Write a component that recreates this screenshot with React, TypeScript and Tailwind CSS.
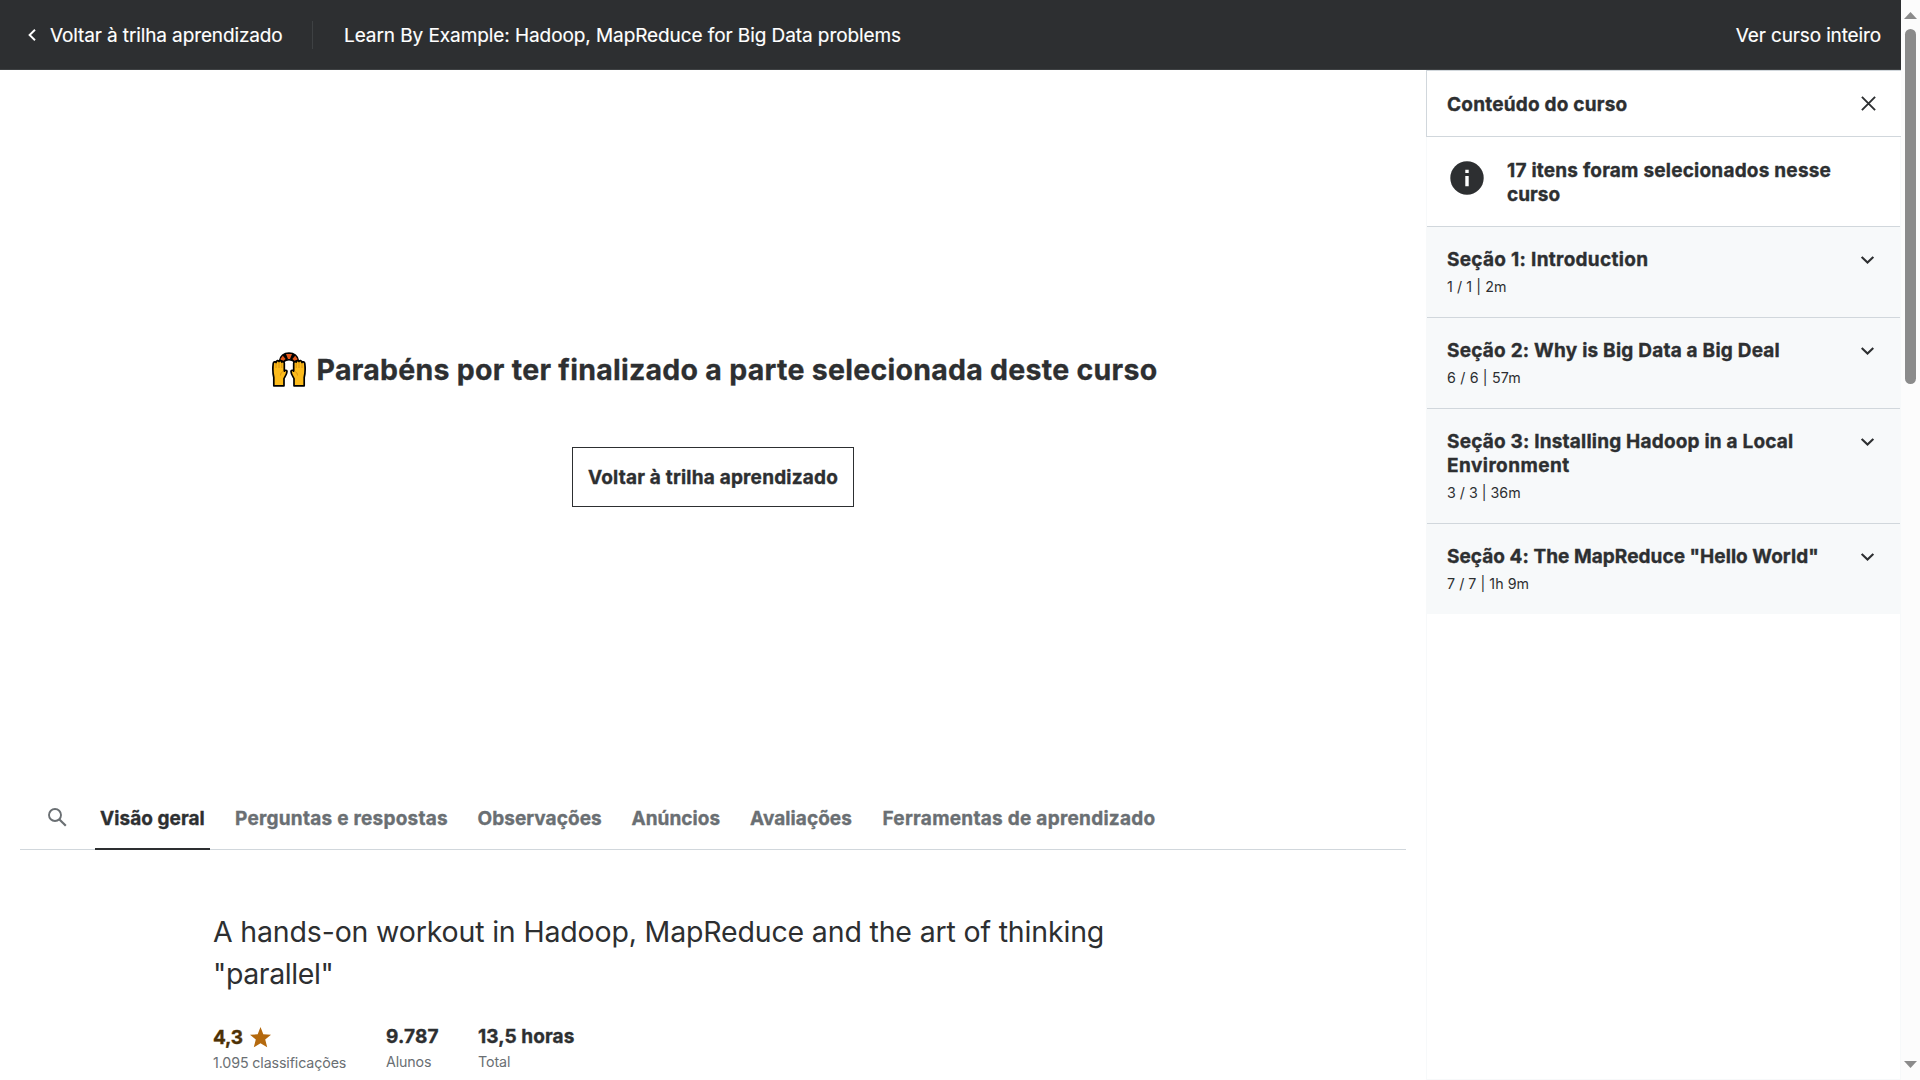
import React from 'react';

type Section = { title: string[]; meta: string; tracking: string; metaTracking: string };

const sections: Section[] = [
  { title: ['Seção 1: Introduction'], meta: '1 / 1 | 2m', tracking: 'tracking-[0.3px]', metaTracking: 'tracking-[0.08px]' },
  { title: ['Seção 2: Why is Big Data a Big Deal'], meta: '6 / 6 | 57m', tracking: 'tracking-[0.22px]', metaTracking: 'tracking-[0.17px]' },
  { title: ['Seção 3: Installing Hadoop in a Local', 'Environment'], meta: '3 / 3 | 36m', tracking: 'tracking-[0.2px]', metaTracking: 'tracking-[0px]' },
  { title: ['Seção 4: The MapReduce "Hello World"'], meta: '7 / 7 | 1h 9m', tracking: 'tracking-[0.05px]', metaTracking: 'tracking-[0.04px]' },
];

const tabs = [
  { label: 'Perguntas e respostas', width: 'w-[242.5px]', tracking: 'tracking-[0.25px]' },
  { label: 'Observações', width: 'w-[154px]', tracking: 'tracking-[0.05px]' },
  { label: 'Anúncios', width: 'w-[118.5px]', tracking: 'tracking-[0.05px]' },
  { label: 'Avaliações', width: 'w-[132.5px]', tracking: 'tracking-[0.07px]' },
  { label: 'Ferramentas de aprendizado', width: 'w-[290px]', tracking: 'tracking-[0.27px]' },
];

function Hand() {
  return (
    <path
      d="M1.800 33.800V25.500C.9 22 .8 15 1.200 11.500 1.400 9.600 3.600 9.400 4 10.600 4.200 8.200 6.600 8 7 9.600 7.400 8 9.700 8.200 9.800 10.200 10.300 9 12.300 9.400 12.300 11.200V19.200C13.200 17.800 15 18 15 19.400 15 22 12.700 25 12 26.500V33.800Z"
      fill="#fcbb1c"
      stroke="#000"
      strokeWidth="1.700"
      strokeLinejoin="round"
    />
  );
}

function RaisedHands() {
  return (
    <svg className="h-[35px] w-[34px] shrink-0" viewBox="0 0 34 35">
      <path d="M7.500 9C8 4 12 1 17 1s9 3 9.500 8L22 9.500c-2.500-2.500-7.500-2.500-10 0z" fill="#000" stroke="#000" strokeWidth="1.500" strokeLinejoin="round" />
      <path d="M8.200 7.200 10.800 3.800 13.600 7 11.200 9zM14 2h6L18 7h-2zM25.800 7.200 23.200 3.800 20.400 7l2.400 2z" fill="#e2581c" />
      <Hand />
      <g transform="translate(34 0) scale(-1 1)">
        <Hand />
      </g>
      <path d="M4 11v5M7 10.500v5.500M9.800 11v5M30 11v5M27 10.500v5.500M24.200 11v5M12 19.500c-2.500 0-3.500 2-3.500 4M22 19.500c2.500 0 3.500 2 3.500 4" stroke="#d08a10" strokeWidth=".8" fill="none" />
    </svg>
  );
}

function TopBar() {
  return (
    <header className="flex h-[70px] items-center border-b border-[#3e4143] bg-[#2d2f31] pl-[27px] pr-5 text-[19px] leading-7 text-white [-webkit-text-stroke:0.15px]">
      <svg className="mr-[13px] h-3 w-[10px]" viewBox="0 0 10 12" fill="none">
        <path d="M8 .8 2.600 6 8 11.200" stroke="#fff" strokeWidth="1.900" />
      </svg>
      <span className="w-[262px] whitespace-nowrap pt-0.5 tracking-[-0.12px]">Voltar à trilha aprendizado</span>
      <span className="h-7 w-px bg-[#3e4143]" />
      <span className="ml-[31px] whitespace-nowrap pt-0.5 tracking-[-0.08px]">Learn By Example: Hadoop, MapReduce for Big Data problems</span>
      <span className="ml-auto whitespace-nowrap pt-0.5 tracking-[-0.13px]">Ver curso inteiro</span>
    </header>
  );
}

function CourseContent() {
  return (
    <aside className="flex w-[475px] shrink-0 flex-col">
      <div className="flex h-[67px] items-center border-y border-l border-[#d1d7dc] pl-[20px] pr-[25px]">
        <h2 className="pt-0.5 text-[19px] font-bold leading-6 tracking-[0.22px] [-webkit-text-stroke:0.35px]">Conteúdo do curso</h2>
        <svg className="ml-auto h-[15px] w-[15px]" viewBox="0 0 15 15" fill="none">
          <path d="M.9.9l13.200 13.200M14.100.9.9 14.100" stroke="#2d2f31" strokeWidth="1.900" />
        </svg>
      </div>
      <div className="flex flex-1 flex-col border-x border-b border-[#f7f9fa]">
        <div className="flex h-[90px] border-b border-[#d1d7dc] pl-[23px] pt-[22px]">
          <svg className="mt-[2px] h-[34px] w-[34px]" viewBox="0 0 34 34">
            <circle cx="17" cy="17" r="16.700" fill="#2d2f31" />
            <path d="M15.300 8.700h3.400v3.300h-3.400zM15.300 15h3.400v10.300h-3.400z" fill="#fff" />
          </svg>
          <p className="ml-[23px] whitespace-nowrap text-[19px] font-bold leading-6 tracking-[0.22px] [-webkit-text-stroke:0.35px]">
            17 itens foram selecionados nesse
            <br />
            <span className="tracking-[0px]">curso</span>
          </p>
        </div>
        {sections.map((s, i) => (
          <div key={s.meta} className={`flex justify-between bg-[#f7f9fa] pb-5 pl-5 pr-[26px] pt-[21px] ${i < 3 ? 'border-b border-[#d1d7dc]' : ''}`}>
            <div className="whitespace-nowrap">
              {s.title.map((line) => (
                <h3
                  key={line}
                  className={`text-[19px] font-bold leading-6 [-webkit-text-stroke:0.35px] ${line === 'Environment' ? 'tracking-[0.45px]' : s.tracking}`}
                >
                  {line}
                </h3>
              ))}
              <p className={`mt-1 text-[14.25px] leading-[21px] ${s.metaTracking}`}>{s.meta}</p>
            </div>
            <svg className="mt-2 h-2 w-[13px]" viewBox="0 0 13 8" fill="none">
              <path d="M.7.9 6.500 6.500 12.300.9" stroke="#2d2f31" strokeWidth="2.100" />
            </svg>
          </div>
        ))}
      </div>
    </aside>
  );
}

function TabBar() {
  return (
    <nav className="mx-5 mt-[277px] flex h-[66px] border-b border-[#d1d7dc] text-[19px] font-bold leading-6 text-[#6a6f73] [-webkit-text-stroke:0.35px]">
      <svg className="ml-[28px] mt-[24px] h-[19px] w-[19px]" viewBox="0 0 19 19" fill="none">
        <circle cx="7" cy="7" r="6" stroke="#6a6f73" strokeWidth="1.900" />
        <path d="m11.200 11.200 6.600 6.600" stroke="#6a6f73" strokeWidth="2.200" />
      </svg>
      <span className="ml-7 h-[66px] w-[115px] shrink-0 whitespace-nowrap border-b-2 border-[#2d2f31] pl-[5px] pt-[23px] tracking-[0.05px] text-[#2d2f31]">Visão geral</span>
      <div className="ml-[25px] flex pt-[23px]">
        {tabs.map((t) => (
          <span key={t.label} className={`whitespace-nowrap ${t.width} ${t.tracking}`}>
            {t.label}
          </span>
        ))}
      </div>
    </nav>
  );
}

function Overview() {
  return (
    <section className="ml-[213px] mt-[61px]">
      <p className="whitespace-nowrap text-[28.5px] leading-[42px] tracking-[-0.165px]">
        A hands-on workout in Hadoop, MapReduce and the art of thinking
        <br />
        <span className="tracking-[-0.4px]">"parallel"</span>
      </p>
      <div className="mt-[30px] flex whitespace-nowrap text-[14.25px] leading-[21px] text-[#6a6f73]">
        <div className="mt-px w-[173px]">
          <div className="flex text-[19px] font-bold leading-6 text-[#4d3105]">
            <span className="w-[37px] tracking-[-0.2px] [-webkit-text-stroke:0.35px]">4,3</span>
            <svg className="mt-px h-[21px] w-[21px]" viewBox="0 0 21 21">
              <path d="M10.500 0 13.300 7.300 21 7.700 15.200 12.600 17.200 20.300 10.500 16.200 3.800 20.300 5.800 12.600 0 7.700 7.700 7.300z" fill="#b4690e" />
            </svg>
          </div>
          <div className="mt-[2px] tracking-[-0.12px]">1.095 classificações</div>
        </div>
        <div className="w-[92px]">
          <div className="text-[19px] font-bold leading-6 tracking-[0.15px] text-[#2d2f31] [-webkit-text-stroke:0.35px]">9.787</div>
          <div className="mt-[2px] tracking-[-0.15px]">Alunos</div>
        </div>
        <div>
          <div className="text-[19px] font-bold leading-6 tracking-[0.08px] text-[#2d2f31] [-webkit-text-stroke:0.35px]">13,5 horas</div>
          <div className="mt-[2px] tracking-[-0.1px]">Total</div>
        </div>
      </div>
    </section>
  );
}

function ScrollBar() {
  return (
    <div className="flex w-[19px] shrink-0 flex-col items-center bg-[#fcfcfc] pb-3 pt-3">
      <svg className="h-[7px] w-[13px]" viewBox="0 0 13 7">
        <path d="M6.500 0 13 7H0z" fill="#8b8b8b" />
      </svg>
      <div className="mt-[10px] h-[355px] w-[11px] rounded-full bg-[#8b8b8b]" />
      <svg className="mt-auto h-[7px] w-[13px]" viewBox="0 0 13 7">
        <path d="M0 0h13L6.500 7z" fill="#8b8b8b" />
      </svg>
    </div>
  );
}

export default function App() {
  return (
    <div className="flex h-[1080px] w-[1920px] overflow-hidden bg-white font-['Inter',sans-serif] text-[#2d2f31]">
      <div className="flex w-[1901px] flex-col">
        <TopBar />
        <div className="flex flex-1">
          <main className="w-[1426px] shrink-0">
            <div className="flex flex-col items-center pt-[282px]">
              <div className="flex h-9 items-start pl-[3px]">
                <RaisedHands />
                <h1 className="ml-[11px] whitespace-nowrap text-[28.5px] font-bold leading-9 tracking-[0.27px] [-webkit-text-stroke:0.3px]">
                  Parabéns por ter finalizado a parte selecionada deste curso
                </h1>
              </div>
              <button className="mt-[59px] h-[60px] w-[282px] whitespace-nowrap border border-[#2d2f31] pt-0.5 text-[19px] font-bold leading-6 tracking-[0.21px] [-webkit-text-stroke:0.35px]">
                Voltar à trilha aprendizado
              </button>
            </div>
            <TabBar />
            <Overview />
          </main>
          <CourseContent />
        </div>
      </div>
      <ScrollBar />
    </div>
  );
}
